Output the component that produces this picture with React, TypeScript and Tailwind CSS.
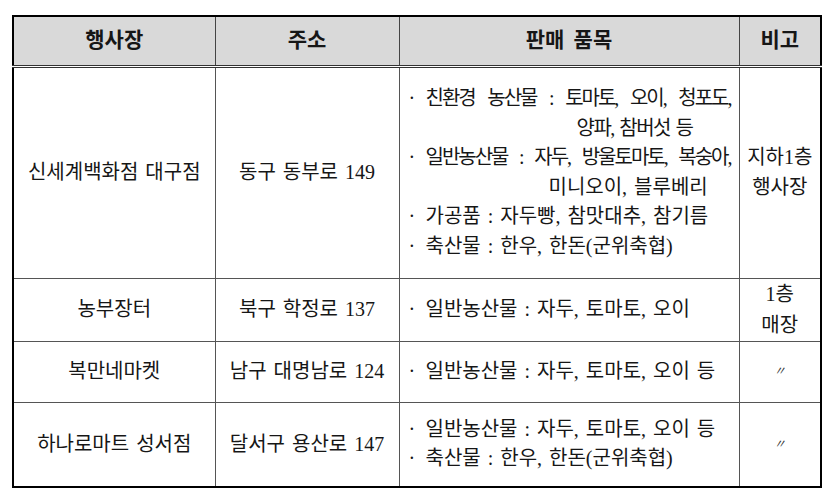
const font = "font-['Liberation_Serif','Noto_Sans_CJK_KR',serif]"

function Bullet({ children, justify }: { children: React.ReactNode; justify?: boolean }) {
  return (
    <div className="flex whitespace-nowrap">
      <span className="w-[19px] shrink-0 pl-[2px]">·</span>
      <span className={justify ? "w-[305px] tracking-[-2px] text-justify [text-align-last:justify]" : ""}>{children}</span>
    </div>
  )
}

export default function App() {
  const th = "border border-[#444] bg-[#d9d9d9] font-bold text-[21px] text-center align-middle"
  const td = "border border-[#555] text-center align-middle"
  const items = "border border-[#555] align-middle text-left pl-[7px]"

  return (
    <div className={`w-[830px] h-[498px] bg-white pl-[12px] pt-[15px] text-[#161616] text-[20px] leading-[29.5px] [word-spacing:2px] ${font}`}>
      <table className="w-[808px] border-collapse border-2 border-black table-fixed">
        <colgroup>
          <col className="w-[202px]" />
          <col className="w-[184px]" />
          <col className="w-[340px]" />
          <col className="w-[82px]" />
        </colgroup>
        <thead>
          <tr className="h-[50px] border-b-[3px] border-double border-b-[#333]">
            <th className={th}>행사장</th>
            <th className={th}>주소</th>
            <th className={`${th} [word-spacing:4px]`}>판매 품목</th>
            <th className={th}>비고</th>
          </tr>
        </thead>
        <tbody>
          <tr className="h-[212px]">
            <td className={td}>신세계백화점 대구점</td>
            <td className={td}>동구 동부로 149</td>
            <td className={items}>
              <Bullet justify>친환경 농산물 : 토마토, 오이, 청포도,</Bullet>
              <div className="pl-[170px] tracking-[-1.5px]">양파, 참버섯 등</div>
              <Bullet justify>일반농산물 : 자두, 방울토마토, 복숭아,</Bullet>
              <div className="pl-[142px]">미니오이, 블루베리</div>
              <Bullet>가공품 : 자두빵, 참맛대추, 참기름</Bullet>
              <Bullet>축산물 : 한우, 한돈(군위축협)</Bullet>
            </td>
            <td className={td}>
              <div>지하1층</div>
              <div>행사장</div>
            </td>
          </tr>
          <tr className="h-[63px]">
            <td className={td}>농부장터</td>
            <td className={td}>북구 학정로 137</td>
            <td className={items}>
              <Bullet>일반농산물 : 자두, 토마토, 오이</Bullet>
            </td>
            <td className={`${td} leading-[31px]`}>
              <div>1층</div>
              <div>매장</div>
            </td>
          </tr>
          <tr className="h-[61px]">
            <td className={td}>복만네마켓</td>
            <td className={td}>남구 대명남로 124</td>
            <td className={items}>
              <Bullet>일반농산물 : 자두, 토마토, 오이 등</Bullet>
            </td>
            <td className={`${td} text-[12px] italic text-[#333]`}>〃</td>
          </tr>
          <tr className="h-[85px]">
            <td className={td}>하나로마트 성서점</td>
            <td className={td}>달서구 용산로 147</td>
            <td className={items}>
              <Bullet>일반농산물 : 자두, 토마토, 오이 등</Bullet>
              <Bullet>축산물 : 한우, 한돈(군위축협)</Bullet>
            </td>
            <td className={`${td} text-[12px] italic text-[#333]`}>〃</td>
          </tr>
        </tbody>
      </table>
    </div>
  )
}
